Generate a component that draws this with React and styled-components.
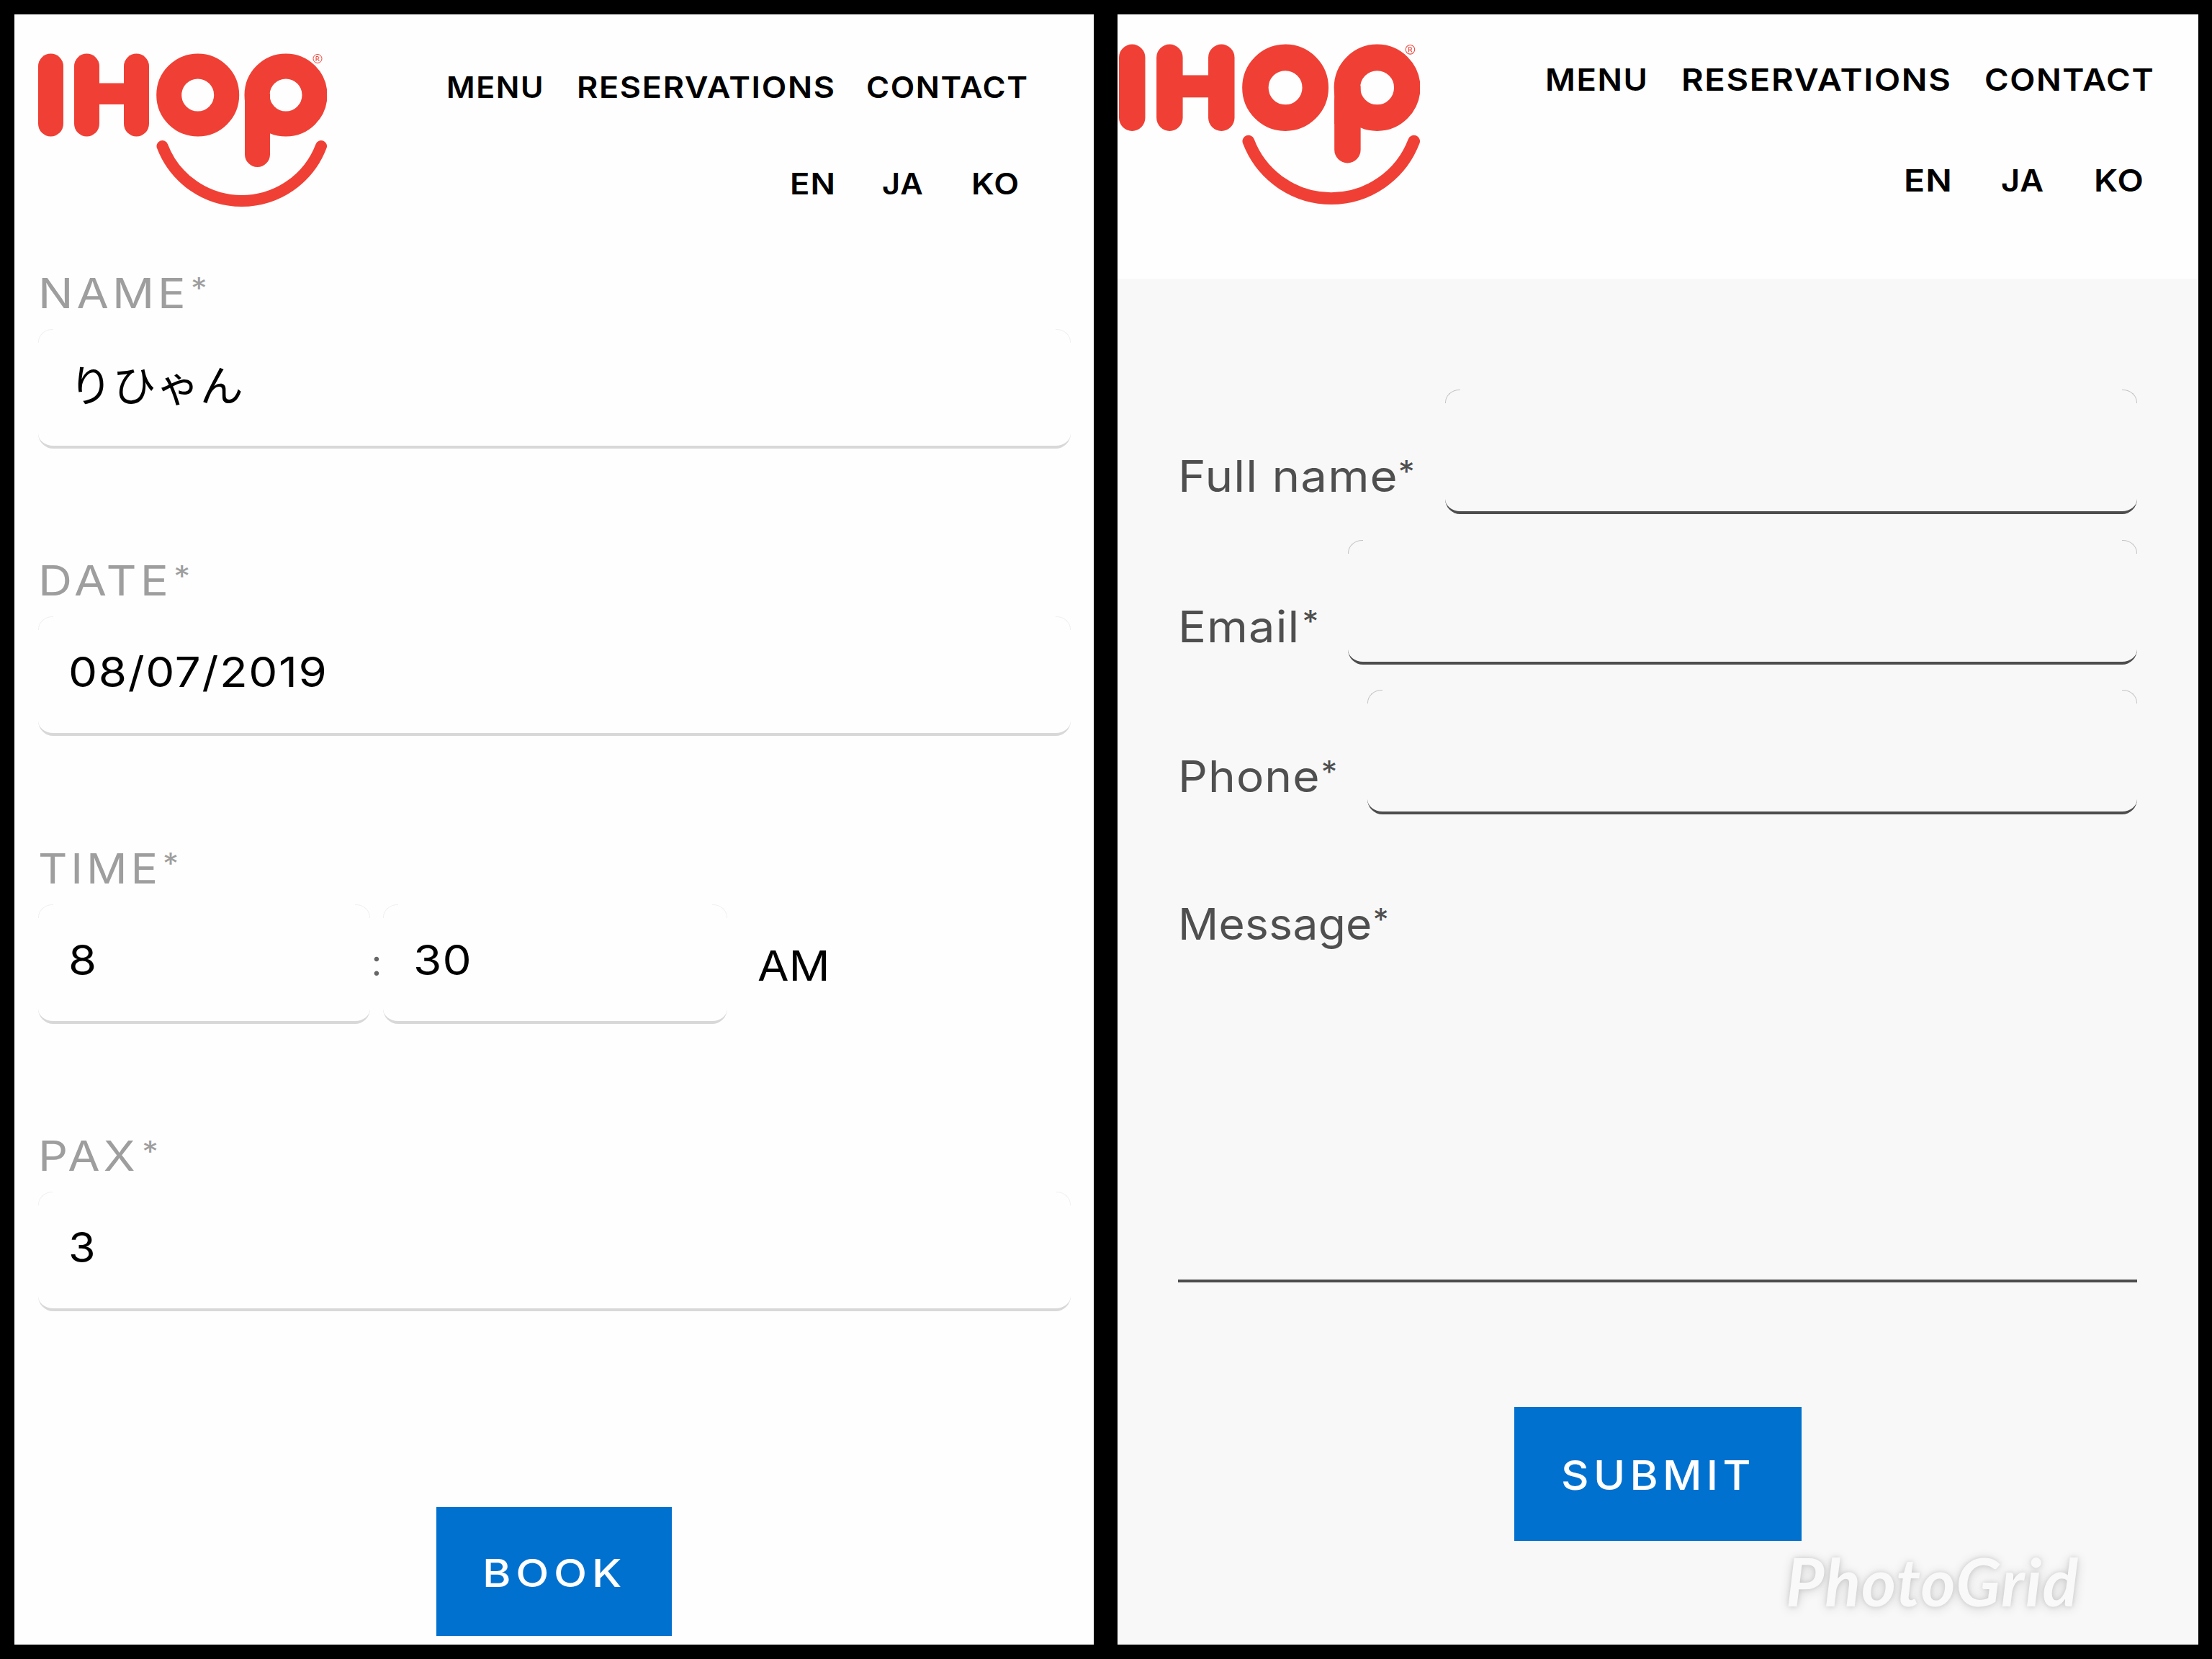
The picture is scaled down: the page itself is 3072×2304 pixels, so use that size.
import React from 'react'
import styled, { createGlobalStyle } from 'styled-components'

const GlobalStyle = createGlobalStyle`
  * {
    box-sizing: border-box;
  }
  body {
    margin: 0;
    background: #000;
    font-family: Inter, "Noto Sans CJK JP", sans-serif;
  }
`

const Board = styled.div`
  display: flex;
  gap: 33px;
  width: 3072px;
  height: 2304px;
  padding: 20px 19px 20px 20px;
  background: #000;
`

const Screen = styled.section`
  display: flex;
  flex-direction: column;
  width: ${(p) => p.$width}px;
  height: 2264px;
  background: #fefefe;
  overflow: hidden;
`

const Header = styled.header`
  display: flex;
  align-items: flex-start;
  flex-shrink: 0;
  height: ${(p) => p.$height}px;
  padding-left: ${(p) => p.$left}px;
  padding-top: ${(p) => p.$top}px;
`

const LogoSvg = styled.svg`
  display: block;
  flex-shrink: 0;
`

const Navs = styled.div`
  display: flex;
  flex-direction: column;
  flex: 1;
  padding-top: ${(p) => p.$top}px;
  gap: ${(p) => p.$gap}px;
`

const Nav = styled.nav`
  display: grid;
  grid-template-columns: ${(p) => p.$columns};
  margin-left: ${(p) => p.$left}px;
  font-size: ${(p) => p.$size}px;
  font-weight: 600;
  line-height: 1;
  letter-spacing: ${(p) => p.$spacing}px;
  color: #000;
  white-space: nowrap;
`

/* widens the letters a little, the brand face is rounder than Inter */
const Wide = styled.span`
  display: inline-block;
  justify-self: start;
  transform: scaleX(${(p) => p.$by || 1.09});
  transform-origin: 0 50%;
`

/* small raised asterisk of a required field */
const Star = styled.span`
  margin-left: ${(p) => p.$gap || 0}px;
  font-size: 0.7em;
  line-height: 0;
  vertical-align: 0.31em;
`

const BookForm = styled.div`
  display: grid;
  grid-template-rows: repeat(4, 399.6px);
  padding: 0 32px 0 33px;
`

const Group = styled.div`
  display: flex;
  flex-direction: column;
  gap: 21px;
`

const Label = styled.div`
  height: 58px;
  font-size: 58px;
  font-weight: 400;
  line-height: 1;
  letter-spacing: 4.5px;
  color: #9e9e9e;
  white-space: nowrap;
`

const Field = styled.div`
  position: relative;
  height: 166px;
  width: ${(p) => (p.$width ? p.$width + 'px' : '100%')};
  padding: 48px 0 0 42px;
  border-bottom: 4px solid #d8d8d8;
  border-radius: 21px;
  font-size: 58px;
  font-weight: 400;
  line-height: 1;
  letter-spacing: ${(p) => p.$spacing || 0}px;
  color: #000;
  white-space: nowrap;

  &::before,
  &::after {
    content: '';
    position: absolute;
    top: 0;
    width: 20px;
    height: 18px;
    border-top: 1px solid #f0f0f0;
  }
  &::before {
    left: 0;
    border-left: 1px solid #f0f0f0;
    border-top-left-radius: 20px 18px;
  }
  &::after {
    right: 0;
    border-right: 1px solid #f0f0f0;
    border-top-right-radius: 20px 18px;
  }
`

const NameField = styled(Field)`
  padding: 45px 0 0 43px;
  font-family: "Noto Sans CJK JP", sans-serif;
  font-size: 60px;
`

const TimeRow = styled.div`
  display: flex;
`

const Colon = styled.div`
  width: 18px;
  padding-top: 56px;
  font-size: 50px;
  line-height: 1;
  text-align: center;
  color: #666;
`

const Meridiem = styled.div`
  padding: 56px 0 0 42px;
  font-size: 58px;
  line-height: 1;
  color: #000;
`

const Button = styled.div`
  width: ${(p) => p.$width}px;
  height: ${(p) => p.$height}px;
  margin-left: ${(p) => p.$left}px;
  margin-top: ${(p) => p.$top}px;
  padding-left: ${(p) => p.$indent}px;
  padding-top: ${(p) => p.$pad}px;
  background: #0171d0;
  color: #fff;
  font-size: ${(p) => p.$size}px;
  font-weight: 500;
  line-height: 1;
  letter-spacing: 6px;
  white-space: nowrap;
`

const ContactForm = styled.div`
  display: flex;
  flex-direction: column;
  position: relative;
  flex: 1;
  padding: 154px 85px 0 84px;
  background: #f8f8f8;
`

const Row = styled.div`
  display: flex;
  height: 208.7px;
`

const ContactLabel = styled.div`
  flex-shrink: 0;
  width: ${(p) => p.$width}px;
  padding-top: 90px;
  font-size: 61px;
  font-weight: 400;
  line-height: 1;
  letter-spacing: 1px;
  color: #4f4f4f;
  white-space: nowrap;
`

const ContactField = styled(Field)`
  flex: 1;
  height: 173px;
  border-bottom-color: #4d4d4d;

  &::before,
  &::after {
    border-color: #c4c4c4;
  }
`

const Message = styled.div`
  height: 614px;
  border-bottom: 4px solid #4d4d4d;
`

const MessageLabel = styled(ContactLabel)`
  padding-top: 86px;
  letter-spacing: 0.3px;
`

const Watermark = styled.div`
  position: absolute;
  left: 928px;
  top: 1763px;
  font-family: Lato, sans-serif;
  font-size: 92px;
  font-style: italic;
  font-weight: 700;
  line-height: 1;
  letter-spacing: 1.2px;
  color: #f9f9f9;
  text-shadow: 0 0 6px rgba(0, 0, 0, 0.12), 0 2px 16px rgba(0, 0, 0, 0.16);
`

const Logo = ({ width, height }) => (
  <LogoSvg width={width} height={height} viewBox="0 0 401 213" preserveAspectRatio="none">
    <g fill="#f04035">
      <rect x="0" y="0.5" width="35" height="115" rx="17.5" />
      <rect x="50" y="0.5" width="35" height="115" rx="17.5" />
      <rect x="119" y="0.5" width="35" height="115" rx="17.5" />
      <rect x="70" y="41.5" width="62" height="29.5" />
      <rect x="287" y="58" width="35" height="100" rx="17.5" />
      <rect x="287" y="56" width="35" height="50" />
    </g>
    <g fill="none" stroke="#f04035">
      <circle cx="221.7" cy="58" r="40" strokeWidth="35" />
      <circle cx="344" cy="58" r="40" strokeWidth="35" />
      <path d="M172.500 129A118 118 0 0 0 393 129" strokeWidth="16" strokeLinecap="round" />
      <circle cx="388" cy="7.500" r="6" strokeWidth="1" />
      <path d="M386 11V4.500H388.500A1.800 1.800 0 0 1 388.500 8H386M388.500 8L390.500 11" strokeWidth="1" />
    </g>
  </LogoSvg>
)

const App = () => {
  return (
    <>
      <GlobalStyle />
      <Board>
        <Screen $width={1499}>
          <Header $height={357.5} $left={33} $top={54}>
            <Logo width={401} height={213} />
            <Navs $top={28} $gap={93}>
              <Nav $columns="181px 402px auto" $left={166} $size={40.5} $spacing={1.5}>
                <Wide $by={1.06}>MENU</Wide>
                <Wide $by={1.11}>RESERVATIONS</Wide>
                <Wide $by={1.075}>CONTACT</Wide>
              </Nav>
              <Nav $columns="128px 124px auto" $left={643} $size={40.5} $spacing={1}>
                <Wide $by={1.12}>EN</Wide>
                <Wide $by={1.07}>JA</Wide>
                <Wide $by={1.12}>KO</Wide>
              </Nav>
            </Navs>
          </Header>
          <BookForm>
            <Group>
              <Label>
                <Wide $by={1.11}>NAME<Star $gap={2}>*</Star></Wide>
              </Label>
              <NameField $spacing={0.6}>りひゃん</NameField>
            </Group>
            <Group>
              <Label>
                <Wide $by={1.125}>DATE<Star $gap={2}>*</Star></Wide>
              </Label>
              <Field $spacing={1.5}>
                <Wide $by={1.096}>08/07/2019</Wide>
              </Field>
            </Group>
            <Group>
              <Label>
                <Wide $by={1.08}>TIME<Star $gap={2}>*</Star></Wide>
              </Label>
              <TimeRow>
                <Field $width={461}>
                  <Wide>8</Wide>
                </Field>
                <Colon>:</Colon>
                <Field $width={478} $spacing={1}>
                  <Wide $by={1.1}>30</Wide>
                </Field>
                <Meridiem>
                  <Wide>AM</Wide>
                </Meridiem>
              </TimeRow>
            </Group>
            <Group>
              <Label>
                <Wide $by={1.11}>PAX<Star $gap={4}>*</Star></Wide>
              </Label>
              <Field>
                <Wide $by={1.05}>3</Wide>
              </Field>
            </Group>
          </BookForm>
          <Button $width={327} $height={179} $left={586} $top={117} $indent={64} $pad={65} $size={54}>
            <Wide $by={1.115}>BOOK</Wide>
          </Button>
        </Screen>
        <Screen $width={1501}>
          <Header $height={367} $left={2} $top={41}>
            <Logo width={418} height={223} />
            <Navs $top={28} $gap={97}>
              <Nav $columns="189px 421px auto" $left={174} $size={43} $spacing={1.5}>
                <Wide $by={1.055}>MENU</Wide>
                <Wide $by={1.095}>RESERVATIONS</Wide>
                <Wide $by={1.063}>CONTACT</Wide>
              </Nav>
              <Nav $columns="135px 129px auto" $left={672} $size={43} $spacing={1}>
                <Wide $by={1.12}>EN</Wide>
                <Wide $by={1.05}>JA</Wide>
                <Wide $by={1.1}>KO</Wide>
              </Nav>
            </Navs>
          </Header>
          <ContactForm>
            <Row>
              <ContactLabel $width={371}>
                <Wide $by={1.073}>Full name<Star>*</Star></Wide>
              </ContactLabel>
              <ContactField />
            </Row>
            <Row>
              <ContactLabel $width={236}>
                <Wide $by={1.065}>Email<Star $gap={3}>*</Star></Wide>
              </ContactLabel>
              <ContactField />
            </Row>
            <Row>
              <ContactLabel $width={263}>
                <Wide $by={1.05}>Phone<Star $gap={1}>*</Star></Wide>
              </ContactLabel>
              <ContactField />
            </Row>
            <Message>
              <MessageLabel $width={371}>
                <Wide $by={1.02}>Message<Star $gap={1}>*</Star></Wide>
              </MessageLabel>
            </Message>
            <Button $width={399} $height={186} $left={467} $top={173} $indent={65} $pad={67} $size={56}>
              <Wide $by={1.065}>SUBMIT</Wide>
            </Button>
            <Watermark>PhotoGrid</Watermark>
          </ContactForm>
        </Screen>
      </Board>
    </>
  )
}

export default App
